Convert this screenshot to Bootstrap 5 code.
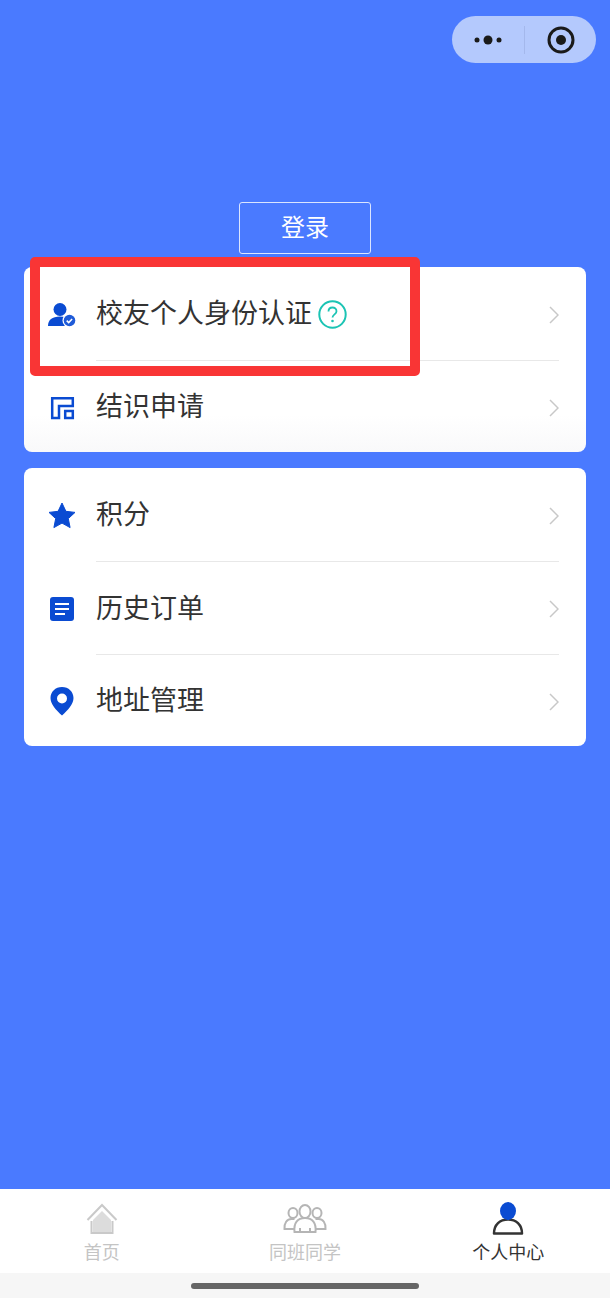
<!DOCTYPE html>
<html lang="zh">
<head>
  <meta charset="UTF-8">
  <title>个人中心</title>
  <meta name="viewport" content="width=device-width, initial-scale=1">
  <link href="https://cdn.jsdelivr.net/npm/bootstrap@5.3.0/dist/css/bootstrap.min.css" rel="stylesheet">
  <style>
    html, body { height: 100%; }
    body {
      background: #4a7aff;
      font-family: "Liberation Sans", "Noto Sans CJK SC", sans-serif;
      overflow: hidden;
    }
    .page { position: relative; width: 610px; height: 1298px; }
    .capsule {
      position: absolute; top: 16px; left: 452px;
      width: 144px; height: 47px; border-radius: 24px;
      background: #b4c9fd;
    }
    .capsule-line { width: 1px; height: 28px; background: #a4b8ec; }
    .capsule-more { width: 72px; }
    .capsule-close { width: 71px; }
    .login-wrap { padding-top: 202px; height: 267px; align-items: flex-start; }
    .login-btn {
      width: 132px; height: 52px; padding: 0;
      border: 1px solid #dbe5ff; border-radius: 3px;
      color: #fff; font-size: 24px; line-height: 50px;
      background: transparent;
    }
    .menu-box {
      margin: 0 24px 16px; background: #fff; border-radius: 8px; border: 0;
      overflow: hidden;
    }
    .menu-box.shade { background: linear-gradient(#fff 80%, #f9f9fa); }
    .menu-row { height: 93px; padding: 0 27px 0 24px; }
    .menu-row:last-child { height: 92px; }
    .menu-icon { width: 48px; flex: none; margin-top: 2px; }
    .menu-body {
      height: 100%; color: #333; font-size: 27px; line-height: 1;
      padding-top: 2px;
    }
    .menu-row + .menu-row .menu-body { border-top: 1px solid #e8e8e8; }
    .help-icon { margin-left: 6px; }
    .red-mark {
      position: absolute; left: 30px; top: 257px;
      width: 390px; height: 119px;
      border: 10px solid #f93535; border-radius: 5px;
      pointer-events: none;
    }
    .tabbar {
      position: absolute; left: 0; top: 1189px; width: 610px; height: 84px;
      background: #fff;
    }
    .tab-item { width: 203.33px; padding-top: 13px; font-size: 18px; line-height: 24px; color: #c4c4c4; }
    .tab-item.on { color: #333; }
    .tab-icon { height: 36px; margin-bottom: 3px; }
    .home-bar { position: absolute; left: 0; top: 1273px; width: 610px; height: 25px; background: #f6f6f6; }
    .home-line { width: 228px; height: 6px; border-radius: 3px; background: #666; margin-top: 10px; }
  </style>
</head>
<body>
<div class="page">

  <!-- capsule -->
  <div class="capsule d-flex align-items-center">
    <div class="capsule-more d-flex justify-content-center">
      <svg width="30" height="12" viewBox="0 0 30 12"><circle cx="4" cy="6" r="2.500" fill="#1a1a1a"/><circle cx="15" cy="6" r="4.500" fill="#1a1a1a"/><circle cx="26" cy="6" r="2.500" fill="#1a1a1a"/></svg>
    </div>
    <div class="capsule-line"></div>
    <div class="capsule-close d-flex justify-content-center">
      <svg width="28" height="28" viewBox="0 0 28 28"><circle cx="14" cy="14" r="12" fill="none" stroke="#1a1a1a" stroke-width="3"/><circle cx="14" cy="14" r="5" fill="#1a1a1a"/></svg>
    </div>
  </div>

  <!-- login -->
  <div class="login-wrap d-flex justify-content-center">
    <button type="button" class="btn login-btn">登录</button>
  </div>

  <!-- first group -->
  <div class="menu-box shade">
    <div class="menu-row d-flex align-items-center">
      <div class="menu-icon">
        <svg width="28" height="26" viewBox="0 0 28 26">
          <circle cx="12" cy="7.500" r="6.500" fill="#0a4bd2"/>
          <path d="M0 24c0-6 4-9.500 12-9.500S24 18 24 24z" fill="#0a4bd2"/>
          <circle cx="21.500" cy="18.500" r="7" fill="#fff"/>
          <circle cx="21.500" cy="18.500" r="5.800" fill="#1f5bd8"/>
          <path d="M18.700 18.600l2 2 3.400-3.700" fill="none" stroke="#fff" stroke-width="1.500"/>
        </svg>
      </div>
      <div class="menu-body flex-grow-1 d-flex align-items-center justify-content-between">
        <span class="d-flex align-items-center">校友个人身份认证
          <svg class="help-icon" width="29" height="29" viewBox="0 0 29 29">
            <circle cx="14.500" cy="14.500" r="13.200" fill="none" stroke="#1cc4b4" stroke-width="2"/>
            <path d="M10.500 11.500c0-2.500 1.800-4 4-4s4 1.500 4 3.700c0 3-4 3.300-4 6.300" fill="none" stroke="#1cc4b4" stroke-width="1.800"/>
            <circle cx="14.500" cy="21" r="1.300" fill="#1cc4b4"/>
          </svg>
        </span>
        <svg width="10" height="18" viewBox="0 0 10 18"><path d="M1 1l8 8-8 8" fill="none" stroke="#c8c8c8" stroke-width="1.500"/></svg>
      </div>
    </div>
    <div class="menu-row d-flex align-items-center">
      <div class="menu-icon">
        <svg width="28" height="26" viewBox="0 0 28 26">
          <path d="M4.200 24V4.200H24.800V12H11V24z" fill="none" stroke="#0a4bd2" stroke-width="2.500"/>
          <rect x="17.200" y="17" width="7.600" height="7" fill="none" stroke="#0a4bd2" stroke-width="2.500"/>
        </svg>
      </div>
      <div class="menu-body flex-grow-1 d-flex align-items-center justify-content-between">
        <span>结识申请</span>
        <svg width="10" height="18" viewBox="0 0 10 18"><path d="M1 1l8 8-8 8" fill="none" stroke="#c8c8c8" stroke-width="1.500"/></svg>
      </div>
    </div>
  </div>

  <!-- second group -->
  <div class="menu-box">
    <div class="menu-row d-flex align-items-center">
      <div class="menu-icon">
        <svg width="28" height="27" viewBox="0 0 28 27">
          <path d="M14 1l3.900 8.300 9.100 1.100-6.700 6.200 1.800 9L14 21.100 5.900 25.600l1.800-9L1 10.400l9.100-1.100z" fill="#0a4bd2" stroke="#0a4bd2" stroke-linejoin="round"/>
        </svg>
      </div>
      <div class="menu-body flex-grow-1 d-flex align-items-center justify-content-between">
        <span>积分</span>
        <svg width="10" height="18" viewBox="0 0 10 18"><path d="M1 1l8 8-8 8" fill="none" stroke="#c8c8c8" stroke-width="1.500"/></svg>
      </div>
    </div>
    <div class="menu-row d-flex align-items-center">
      <div class="menu-icon">
        <svg width="28" height="26" viewBox="0 0 28 26">
          <rect x="2" y="1" width="24" height="24" rx="3" fill="#0a4bd2"/>
          <path d="M7 8h14M7 13h14M7 18h10" stroke="#fff" stroke-width="1.800"/>
        </svg>
      </div>
      <div class="menu-body flex-grow-1 d-flex align-items-center justify-content-between">
        <span>历史订单</span>
        <svg width="10" height="18" viewBox="0 0 10 18"><path d="M1 1l8 8-8 8" fill="none" stroke="#c8c8c8" stroke-width="1.500"/></svg>
      </div>
    </div>
    <div class="menu-row d-flex align-items-center">
      <div class="menu-icon">
        <svg width="28" height="30" viewBox="0 0 28 30">
          <path fill-rule="evenodd" d="M14 1C7.400 1 2.500 5.800 2.500 12c0 6 5.500 12 11.500 17.500C20 24 25.500 18 25.500 12 25.500 5.800 20.600 1 14 1zm0 6.500a5 5 0 1 1 0 10 5 5 0 0 1 0-10z" fill="#0a4bd2"/>
        </svg>
      </div>
      <div class="menu-body flex-grow-1 d-flex align-items-center justify-content-between">
        <span>地址管理</span>
        <svg width="10" height="18" viewBox="0 0 10 18"><path d="M1 1l8 8-8 8" fill="none" stroke="#c8c8c8" stroke-width="1.500"/></svg>
      </div>
    </div>
  </div>

  <!-- red annotation -->
  <div class="red-mark"></div>

  <!-- tabbar -->
  <div class="tabbar d-flex">
    <div class="tab-item text-center">
      <div class="tab-icon">
        <svg width="32" height="32" viewBox="0 0 32 32">
          <path d="M1.500 18L16 3l14.500 15" fill="none" stroke="#c9c9c9" stroke-width="2"/>
          <path d="M16 9l9 9v13H7V18z" fill="#dcdcdc"/>
          <path d="M5.500 19v12h21V19" fill="none" stroke="#c9c9c9" stroke-width="2"/>
        </svg>
      </div>
      首页
    </div>
    <div class="tab-item text-center">
      <div class="tab-icon">
        <svg width="44" height="32" viewBox="0 0 44 32">
          <g fill="none" stroke="#b5b5b5" stroke-width="2">
            <ellipse cx="10" cy="11" rx="4.500" ry="5"/>
            <ellipse cx="34" cy="11" rx="4.500" ry="5"/>
            <ellipse cx="22" cy="9.500" rx="5.500" ry="6.500"/>
            <path d="M11 27H1.500c-.5-6 2.500-10 7-10h3M33 27h9.500c.5-6-2.500-10-7-10h-3"/>
            <path d="M11.500 30c-1-9 3-14 10.500-14s11.500 5 10.500 14zM17 30v-4M27 30v-4" fill="#fff"/>
          </g>
        </svg>
      </div>
      同班同学
    </div>
    <div class="tab-item on text-center">
      <div class="tab-icon">
        <svg width="32" height="34" viewBox="0 0 32 34">
          <path d="M2 31.500c0-9 6-14 14-14s14 5 14 14z" fill="none" stroke="#333" stroke-width="2.500" stroke-linejoin="round"/>
          <ellipse cx="16" cy="9" rx="8" ry="9" fill="#0a4bd2"/>
        </svg>
      </div>
      个人中心
    </div>
  </div>
  <div class="home-bar d-flex justify-content-center">
    <div class="home-line"></div>
  </div>

</div>
<script src="https://cdn.jsdelivr.net/npm/bootstrap@5.3.0/dist/js/bootstrap.bundle.min.js"></script>
</body>
</html>
